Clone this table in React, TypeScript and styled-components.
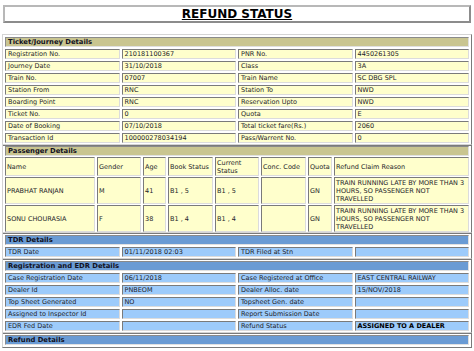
import styled, { createGlobalStyle } from 'styled-components'

const GlobalStyle = createGlobalStyle`
  body {
    margin: 0;
    background: #ffffff;
    font-family: "DejaVu Sans", Verdana, sans-serif;
    color: #1e1e2a;
  }
`

const Page = styled.div`
  width: 474px;
  padding: 5px 2px 0 2px;
  box-sizing: border-box;
`

const TitleBox = styled.div`
  height: 18px;
  margin: 0 1px 13px 1px;
  border: 2px solid;
  border-color: #b8b8b8 #8c8c8c #8c8c8c #b8b8b8;
  box-sizing: border-box;
  display: flex;
  align-items: center;
  justify-content: center;
`

const Title = styled.h1`
  margin: 0;
  font-size: 12px;
  line-height: 14px;
  font-weight: 700;
  text-decoration: underline;
  color: #000000;
`

const tones = {
  olive: { head: '#c9c590', cell: '#ffffcc' },
  blue: { head: '#6a9bd4', cell: '#9dcbfb' },
}

type Tone = keyof typeof tones

// sections sit 2px into each other so neighbouring tables leave a 4px seam
const Table = styled.table<{ $tone: Tone }>`
  width: 100%;
  table-layout: fixed;
  border-spacing: 2px;
  border: 1px solid;
  border-color: #d4d4d4 #7a7a7a #7a7a7a #d4d4d4;
  margin-top: -2px;
  position: relative;
  font-size: 6.5px;

  td {
    background: ${(p) => tones[p.$tone].cell};
    border: 1px solid;
    border-color: #7a7a7a #dcdcdc #dcdcdc #7a7a7a;
    padding: 0 0 0 2px;
    line-height: 8px;
    text-align: left;
    font-weight: 400;
    vertical-align: middle;
    overflow: hidden;
  }
`

const PassTable = styled(Table)`
  border-spacing: 2px 1px;

  td {
    padding: 1px 0 0 1px;
  }
`

const Head = styled.td<{ $tone: Tone }>`
  && {
    background: ${(p) => tones[p.$tone].head};
    font-weight: 700;
    color: #111122;
    font-size: 6.8px;
    padding: 0 0 0 2px;
    border-color: #8a8a8a #e0e0e0 #e0e0e0 #8a8a8a;
  }
`

const Strong = styled.td`
  && {
    font-weight: 700;
    color: #000000;
  }
`

const Col = styled.col<{ $w: number }>`
  width: ${(p) => p.$w}px;
`

type Row = [string, string, string, string]

const ticketRows: Row[] = [
  ['Registration No.', '210181100367', 'PNR No.', '4450261305'],
  ['Journey Date', '31/10/2018', 'Class', '3A'],
  ['Train No.', '07007', 'Train Name', 'SC DBG SPL'],
  ['Station From', 'RNC', 'Station To', 'NWD'],
  ['Boarding Point', 'RNC', 'Reservation Upto', 'NWD'],
  ['Ticket No.', '0', 'Quota', 'E'],
  ['Date of Booking', '07/10/2018', 'Total ticket fare(Rs.)', '2060'],
  ['Transaction Id', '100000278034194', 'Pass/Warrent No.', '0'],
]

const reason = 'TRAIN RUNNING LATE BY MORE THAN 3 HOURS, SO PASSENGER NOT TRAVELLED'

const passengers = [
  ['PRABHAT RANJAN', 'M', '41', 'B1 , 5', 'B1 , 5', '', 'GN', reason],
  ['SONU CHOURASIA', 'F', '38', 'B1 , 4', 'B1 , 4', '', 'GN', reason],
]

// border-box widths of the passenger columns
const passCols = [90, 44, 23, 45, 44, 45, 24, 135]

const registrationRows: Row[] = [
  ['Case Registration Date', '06/11/2018', 'Case Registered at Office', 'EAST CENTRAL RAILWAY'],
  ['Dealer Id', 'PNBEOM', 'Dealer Alloc. date', '15/NOV/2018'],
  ['Top Sheet Generated', 'NO', 'Topsheet Gen. date', ''],
  ['Assigned to Inspector Id', '', 'Report Submission Date', ''],
]

function DetailTable({ tone, title, rows, last }: { tone: Tone; title: string; rows: Row[]; last?: Row }) {
  return (
    <Table $tone={tone}>
      <tbody>
        <tr>
          <Head $tone={tone} colSpan={4}>{title}</Head>
        </tr>
        {rows.map((r) => (
          <tr key={r[0]}>
            {r.map((c, i) => (
              <td key={i}>{c}</td>
            ))}
          </tr>
        ))}
        {last && (
          <tr>
            <td>{last[0]}</td>
            <td>{last[1]}</td>
            <td>{last[2]}</td>
            <Strong>{last[3]}</Strong>
          </tr>
        )}
      </tbody>
    </Table>
  )
}

export default function App() {
  return (
    <>
      <GlobalStyle />
      <Page>
        <TitleBox>
          <Title>REFUND STATUS</Title>
        </TitleBox>

        <DetailTable tone='olive' title='Ticket/Journey Details' rows={ticketRows} />

        <PassTable $tone='olive'>
          <colgroup>
            {passCols.map((w, i) => (
              <Col key={i} $w={w} />
            ))}
          </colgroup>
          <tbody>
            <tr>
              <Head $tone='olive' colSpan={8}>Passenger Details</Head>
            </tr>
            <tr>
              <td>Name</td>
              <td>Gender</td>
              <td>Age</td>
              <td>Book Status</td>
              <td>Current Status</td>
              <td>Conc. Code</td>
              <td>Quota</td>
              <td>Refund Claim Reason</td>
            </tr>
            {passengers.map((p) => (
              <tr key={p[0]}>
                {p.map((c, i) => (
                  <td key={i}>{c}</td>
                ))}
              </tr>
            ))}
          </tbody>
        </PassTable>

        <DetailTable tone='blue' title='TDR Details' rows={[['TDR Date', '01/11/2018 02:03', 'TDR Filed at Stn', '']]} />

        <DetailTable
          tone='blue'
          title='Registration and EDR Details'
          rows={registrationRows}
          last={['EDR Fed Date', '', 'Refund Status', 'ASSIGNED TO A DEALER']}
        />

        <DetailTable tone='blue' title='Refund Details' rows={[]} />
      </Page>
    </>
  )
}
